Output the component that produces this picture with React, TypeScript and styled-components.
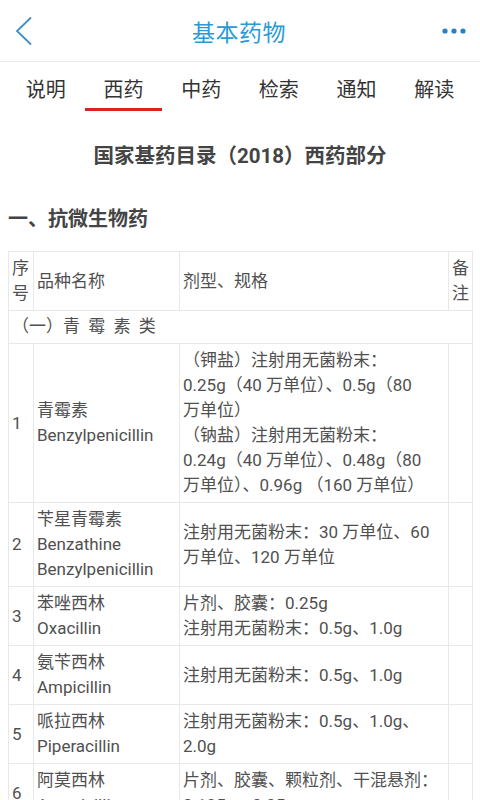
import React from 'react';
import styled, { createGlobalStyle } from 'styled-components';

const GlobalStyle = createGlobalStyle`
  html, body {
    margin: 0;
    padding: 0;
    background: #fff;
  }
  body {
    font-family: Roboto, "Noto Sans CJK SC", sans-serif;
  }
`;

const Page = styled.div`
  width: 480px;
  background: #fff;
`;

const Header = styled.header`
  height: 62px;
  display: flex;
  align-items: center;
  justify-content: space-between;
  padding: 0 12px 0 10px;
  border-bottom: 1px solid #ebebeb;
  box-sizing: border-box;
`;

const IconButton = styled.button`
  width: 28px;
  height: 40px;
  border: 0;
  padding: 0;
  background: none;
  display: flex;
  align-items: center;
  justify-content: center;
`;

const Title = styled.h1`
  margin: 0;
  font-size: 23px;
  font-weight: 400;
  color: #2b9ad3;
  letter-spacing: 0.5px;
`;

const Tabs = styled.nav`
  display: grid;
  grid-template-columns: repeat(6, 1fr);
  padding: 0 7px;
  height: 49px;
`;

const Tab = styled.div<{ $active?: boolean }>`
  display: flex;
  align-items: center;
  justify-content: center;
  font-size: 20px;
  color: #333;
  border-bottom: 3px solid ${(p) => (p.$active ? '#d8231f' : 'transparent')};
  padding-top: 7px;
  box-sizing: border-box;
`;

const Content = styled.main`
  padding: 0 8px;
`;

const DocTitle = styled.h2`
  margin: 0;
  padding-top: 28px;
  text-align: center;
  font-size: 20.5px;
  font-weight: 700;
  color: #444;
`;

const Section = styled.h3`
  margin: 0;
  padding-top: 34px;
  font-size: 20px;
  font-weight: 700;
  color: #444;
`;

const Table = styled.table`
  margin-top: 19px;
  width: 464px;
  border-collapse: collapse;
  table-layout: fixed;
  color: #505050;
  font-size: 17px;
  line-height: 25px;
`;

const Cell = styled.td`
  border: 1px solid #e8e8e8;
  padding: 4px 3px;
  vertical-align: middle;
  word-break: break-word;
`;

const GroupCell = styled.td`
  border: 1px solid #e8e8e8;
  padding: 3px 3px 4px;
  word-spacing: 4px;
`;

const Dots = () => (
  <svg width="24" height="8" viewBox="0 0 24 8">
    <circle cx="3" cy="4" r="2.6" fill="#2a80c2" />
    <circle cx="12" cy="4" r="2.6" fill="#2a80c2" />
    <circle cx="21" cy="4" r="2.6" fill="#2a80c2" />
  </svg>
);

const Back = () => (
  <svg width="20" height="30" viewBox="0 0 20 30">
    <path d="M17 1.5 L3 15 L17 28.5" fill="none" stroke="#3f8dc9" strokeWidth="1.8" />
  </svg>
);

const tabs = ['说明', '西药', '中药', '检索', '通知', '解读'];

const rows: { no: string; name: React.ReactNode; spec: React.ReactNode }[] = [
  {
    no: '1',
    name: (<>青霉素<br />Benzylpenicillin</>),
    spec: (
      <>
        （钾盐）注射用无菌粉末：<br />
        0.25g（40 万单位）、0.5g（80<br />
        万单位）<br />
        （钠盐）注射用无菌粉末：<br />
        0.24g（40 万单位）、0.48g（80<br />
        万单位）、0.96g （160 万单位）
      </>
    ),
  },
  {
    no: '2',
    name: (<>苄星青霉素<br />Benzathine<br />Benzylpenicillin</>),
    spec: (<>注射用无菌粉末：30 万单位、60<br />万单位、120 万单位</>),
  },
  {
    no: '3',
    name: (<>苯唑西林<br />Oxacillin</>),
    spec: (<>片剂、胶囊：0.25g<br />注射用无菌粉末：0.5g、1.0g</>),
  },
  {
    no: '4',
    name: (<>氨苄西林<br />Ampicillin</>),
    spec: <>注射用无菌粉末：0.5g、1.0g</>,
  },
  {
    no: '5',
    name: (<>哌拉西林<br />Piperacillin</>),
    spec: (<>注射用无菌粉末：0.5g、1.0g、<br />2.0g</>),
  },
  {
    no: '6',
    name: (<>阿莫西林<br />Amoxicillin</>),
    spec: (<>片剂、胶囊、颗粒剂、干混悬剂：<br />0.125g、0.25g</>),
  },
];

export default function App() {
  return (
    <Page>
      <GlobalStyle />
      <Header>
        <IconButton aria-label="返回">
          <Back />
        </IconButton>
        <Title>基本药物</Title>
        <IconButton aria-label="更多">
          <Dots />
        </IconButton>
      </Header>
      <Tabs>
        {tabs.map((t) => (
          <Tab key={t} $active={t === '西药'}>
            {t}
          </Tab>
        ))}
      </Tabs>
      <Content>
        <DocTitle>国家基药目录（2018）西药部分</DocTitle>
        <Section>一、抗微生物药</Section>
        <Table>
          <colgroup>
            <col style={{ width: 25 }} />
            <col style={{ width: 146 }} />
            <col style={{ width: 269 }} />
            <col style={{ width: 24 }} />
          </colgroup>
          <tbody>
            <tr>
              <Cell>序号</Cell>
              <Cell>品种名称</Cell>
              <Cell>剂型、规格</Cell>
              <Cell>备注</Cell>
            </tr>
            <tr>
              <GroupCell colSpan={4}>（一）青 霉 素 类</GroupCell>
            </tr>
            {rows.map((r) => (
              <tr key={r.no}>
                <Cell>{r.no}</Cell>
                <Cell>{r.name}</Cell>
                <Cell>{r.spec}</Cell>
                <Cell />
              </tr>
            ))}
          </tbody>
        </Table>
      </Content>
    </Page>
  );
}
